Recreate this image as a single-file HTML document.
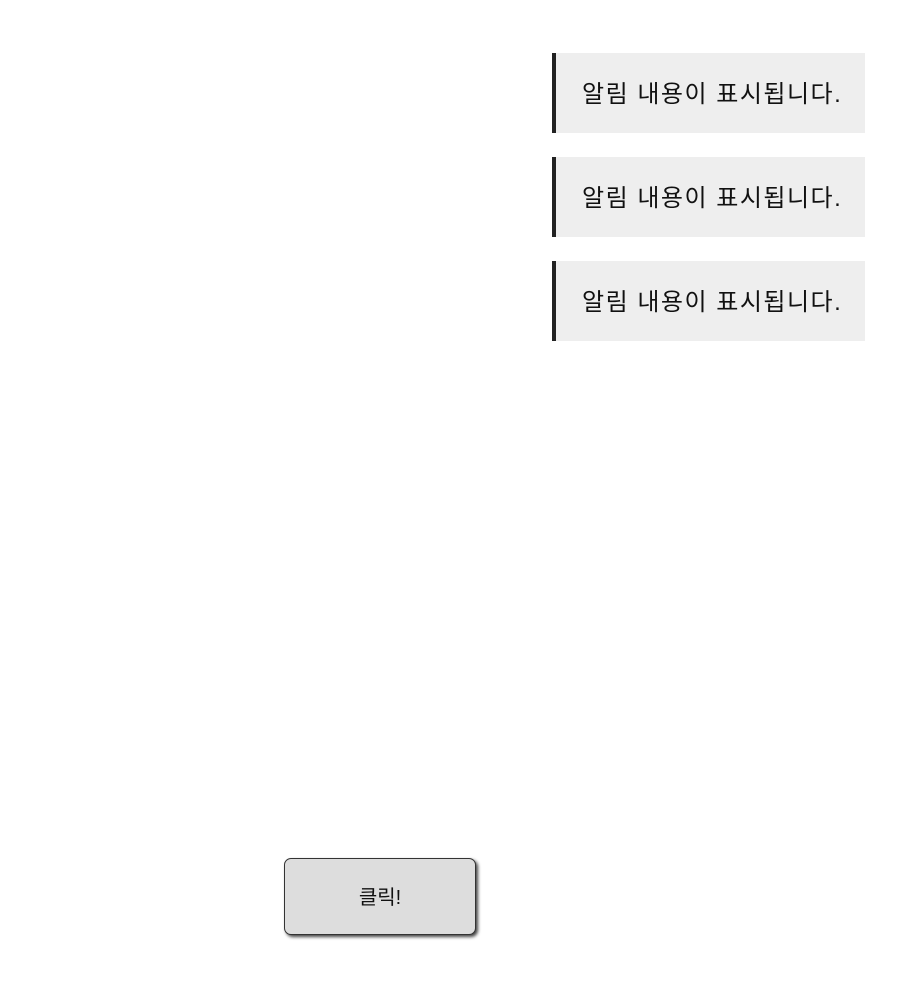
<!DOCTYPE html>
<html><head><meta charset="utf-8"><style>
html,body{margin:0;padding:0;width:909px;height:981px;background:#fff;overflow:hidden;font-family:"Liberation Sans","Noto Sans CJK KR","NanumGothic",sans-serif;}
.n{position:absolute;left:552px;width:313px;height:80px;background:#eeeeee;border-left:4px solid #222;box-sizing:border-box;font-size:24px;letter-spacing:1.5px;color:#111;line-height:84px;padding-left:26px;white-space:nowrap;}
.b{position:absolute;left:284px;top:858px;width:192px;height:77px;box-sizing:border-box;background:#dddddd;border:1px solid #333;border-radius:7px;box-shadow:2px 2px 3px #444;text-align:center;line-height:79px;font-size:20px;color:#111;}
</style></head><body>
<div class="n" style="top:53px">알림 내용이 표시됩니다.</div>
<div class="n" style="top:157px">알림 내용이 표시됩니다.</div>
<div class="n" style="top:261px">알림 내용이 표시됩니다.</div>
<div class="b">클릭!</div>
</body></html>
